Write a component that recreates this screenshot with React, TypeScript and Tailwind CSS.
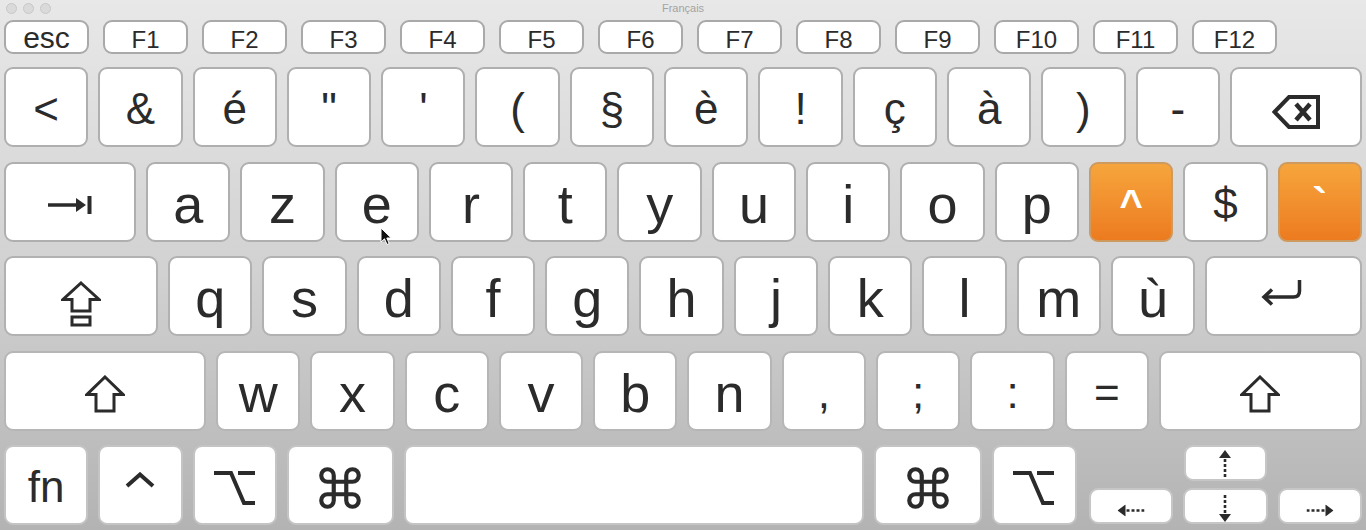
import { Command } from 'lucide-react';
import type { ReactNode } from 'react';

const fkeys = ['F1', 'F2', 'F3', 'F4', 'F5', 'F6', 'F7', 'F8', 'F9', 'F10', 'F11', 'F12'];
const numRow = ['<', '&', 'é', '"', "'", '(', '§', 'è', '!', 'ç', 'à', ')', '-'];
const azerty = ['a', 'z', 'e', 'r', 't', 'y', 'u', 'i', 'o', 'p'];
const qsdf = ['q', 's', 'd', 'f', 'g', 'h', 'j', 'k', 'l', 'm', 'ù'];
const wxcv = ['w', 'x', 'c', 'v', 'b', 'n'];
const punct = [',', ';', ':', '='];

function Key({ className, children }: { className: string; children?: ReactNode }) {
  return (
    <div
      className={`flex shrink-0 items-center justify-center rounded-[9px] border-2 bg-white text-[#2b2b2b] ${className}`}
    >
      {children}
    </div>
  );
}

function Label({ children, big }: { children: ReactNode; big?: boolean }) {
  return (
    <span className={`pt-[4px] leading-none ${big ? 'text-[54px]' : 'text-[44px]'}`}>{children}</span>
  );
}

function ShiftIcon() {
  return (
    <svg width="40" height="38" viewBox="0 0 40 38" className="mt-[6px]" fill="none" stroke="#2b2b2b" strokeWidth={3}>
      <path d="M20 2 L38 19.5 H29 V36 H11 V19.5 H2 Z" strokeLinejoin="miter" />
    </svg>
  );
}

function DotArrow({ dir }: { dir: 'up' | 'down' | 'left' | 'right' }) {
  const rot = { up: 0, down: 180, left: 270, right: 90 }[dir];
  return (
    <svg width="12" height="27" viewBox="0 0 12 27" style={{ transform: `rotate(${rot}deg)` }}>
      <polygon points="6,0 12,8 0,8" fill="#2b2b2b" />
      <line x1="6" y1="9" x2="6" y2="27" stroke="#2b2b2b" strokeWidth={2.6} strokeDasharray="3 2" />
    </svg>
  );
}

export default function App() {
  return (
    <div
      className="relative h-[530px] w-[1366px] overflow-hidden bg-gradient-to-b from-[#e8e8e8] via-[#d2d2d2] to-[#b3b3b3]"
      style={{ fontFamily: '"Liberation Sans", Arial, sans-serif' }}
    >
      {/* title bar */}
      <div className="relative flex h-[16px] items-center px-[6px]">
        <div className="flex gap-[6px]">
          <span className="h-[11px] w-[11px] rounded-full border border-[#c8c8c8] bg-[#dadada]" />
          <span className="h-[11px] w-[11px] rounded-full border border-[#c8c8c8] bg-[#dadada]" />
          <span className="h-[11px] w-[11px] rounded-full border border-[#c8c8c8] bg-[#dadada]" />
        </div>
        <span className="absolute inset-x-0 top-[1px] text-center text-[11px] leading-[14px] text-[#a3a3a3]">
          Français
        </span>
      </div>

      <div className="flex flex-col px-[4px]">
        {/* function row */}
        <div className="mt-[4px] flex h-[34px] gap-[14px]">
          <Key className="w-[85px] border-[#a9a9a9]">
            <span className="pt-[1px] text-[30px] leading-none">esc</span>
          </Key>
          {fkeys.map((f) => (
            <Key key={f} className="w-[85px] border-[#a9a9a9]">
              <span className="pt-[6px] text-[24px] leading-none">{f}</span>
            </Key>
          ))}
        </div>

        <div className="mt-[13px] flex flex-col gap-[14.5px]">
          {/* number row */}
          <div className="flex h-[80px] gap-[10px]">
            {numRow.map((k) => (
              <Key key={k} className="w-[84.3px] border-[#afafaf]">
                <Label>{k}</Label>
              </Key>
            ))}
            <Key className="flex-1 border-[#afafaf]">
              <svg width="48" height="34" viewBox="0 0 48 34" className="mt-[9px]" fill="none" stroke="#2b2b2b">
                <path d="M2.5 17 L17 2 H46 V32 H17 Z" strokeWidth={4} />
                <path d="M24 9 L38 25 M38 9 L24 25" strokeWidth={4.5} />
              </svg>
            </Key>
          </div>

          {/* azerty row */}
          <div className="flex h-[80px] gap-[10px]">
            <Key className="w-[132px] border-[#afafaf]">
              <svg width="44" height="20" viewBox="0 0 44 20" className="mt-[6px]">
                <line x1="0" y1="10" x2="30" y2="10" stroke="#2b2b2b" strokeWidth={3.5} />
                <polygon points="28,3 38,10 28,17" fill="#2b2b2b" />
                <rect x="39.5" y="1" width="4" height="18" fill="#2b2b2b" />
              </svg>
            </Key>
            {azerty.map((k) => (
              <Key key={k} className="w-[84.3px] border-[#afafaf]">
                <Label big>{k}</Label>
              </Key>
            ))}
            <Key className="w-[84.3px] border-[#cf9a5e] bg-gradient-to-b from-[#f6a53c] to-[#ec7b1f] text-white">
              <span className="pt-[4px] text-[40px] font-bold leading-none text-white">^</span>
            </Key>
            <Key className="w-[84.3px] border-[#afafaf]">
              <Label>$</Label>
            </Key>
            <Key className="flex-1 border-[#cf9a5e] bg-gradient-to-b from-[#f6a53c] to-[#ec7b1f] text-white">
              <span className="pt-[4px] text-[44px] font-bold leading-none text-white">`</span>
            </Key>
          </div>

          {/* qsdf row */}
          <div className="flex h-[80px] gap-[10px]">
            <Key className="w-[154px] border-[#b1b1b1]">
              <svg width="40" height="46" viewBox="0 0 40 46" className="mt-[15px]" fill="none" stroke="#2b2b2b" strokeWidth={3}>
                <path d="M20 2 L38 18.5 H29 V30 H11 V18.5 H2 Z" />
                <rect x="11" y="36" width="18" height="8" />
              </svg>
            </Key>
            {qsdf.map((k) => (
              <Key key={k} className="w-[84.3px] border-[#b1b1b1]">
                <Label big>{k}</Label>
              </Key>
            ))}
            <Key className="flex-1 border-[#b1b1b1]">
              <svg width="42" height="30" viewBox="0 0 42 30" className="mr-[4px] mt-[-6px]" fill="none" stroke="#2b2b2b" strokeWidth={3.5}>
                <path d="M38.5 2 V13 Q38.5 19 32.5 19 H4" />
                <path d="M11 11.5 L3 19 L11 26.5" />
              </svg>
            </Key>
          </div>

          {/* wxcv row */}
          <div className="flex h-[80px] gap-[10px]">
            <Key className="w-[202px] border-[#b6b6b6]">
              <ShiftIcon />
            </Key>
            {wxcv.map((k) => (
              <Key key={k} className="w-[84.3px] border-[#b6b6b6]">
                <Label big>{k}</Label>
              </Key>
            ))}
            {punct.map((k) => (
              <Key key={k} className="w-[84.3px] border-[#b6b6b6]">
                <Label>{k}</Label>
              </Key>
            ))}
            <Key className="flex-1 border-[#b6b6b6]">
              <ShiftIcon />
            </Key>
          </div>

          {/* bottom row */}
          <div className="flex h-[80px] gap-[10px]">
            <Key className="w-[84.3px] border-[#c4c4c4]">
              <Label>fn</Label>
            </Key>
            <Key className="w-[84.3px] border-[#c4c4c4]">
              <svg width="30" height="16" viewBox="0 0 30 16" className="mb-[10px]" fill="none" stroke="#2b2b2b" strokeWidth={4}>
                <path d="M2 14 L15 2.5 L28 14" />
              </svg>
            </Key>
            <Key className="w-[84.3px] border-[#c4c4c4]">
              <svg width="42" height="36" viewBox="0 0 42 36" className="mt-[6px]" fill="none" stroke="#2b2b2b" strokeWidth={4}>
                <path d="M0 3 H17 L30 33 H41" />
                <path d="M24 3 H41" />
              </svg>
            </Key>
            <Key className="w-[107px] border-[#c4c4c4]">
              <Command size={50} strokeWidth={2} color="#2b2b2b" className="mt-[5px]" />
            </Key>
            <Key className="w-[460px] border-[#c4c4c4]" />
            <Key className="w-[108px] border-[#c4c4c4]">
              <Command size={50} strokeWidth={2} color="#2b2b2b" className="mt-[5px]" />
            </Key>
            <Key className="w-[85px] border-[#c4c4c4]">
              <svg width="42" height="36" viewBox="0 0 42 36" className="mt-[6px]" fill="none" stroke="#2b2b2b" strokeWidth={4}>
                <path d="M0 3 H17 L30 33 H41" />
                <path d="M24 3 H41" />
              </svg>
            </Key>

            {/* arrow cluster */}
            <div className="flex flex-1 flex-col gap-[7px] pl-[2px]">
              <div className="flex h-[36px] justify-center">
                <Key className="w-[83px] rounded-[7px] border-[#c6c6c6]">
                  <DotArrow dir="up" />
                </Key>
              </div>
              <div className="flex h-[36px] gap-[10px]">
                <Key className="flex-1 rounded-[7px] border-[#c6c6c6]">
                  <div className="mt-[8px] flex h-[12px] w-[27px] items-center justify-center">
                    <DotArrow dir="left" />
                  </div>
                </Key>
                <Key className="flex-1 rounded-[7px] border-[#c6c6c6]">
                  <div className="mt-[4px]">
                    <DotArrow dir="down" />
                  </div>
                </Key>
                <Key className="flex-1 rounded-[7px] border-[#c6c6c6]">
                  <div className="mt-[8px] flex h-[12px] w-[27px] items-center justify-center">
                    <DotArrow dir="right" />
                  </div>
                </Key>
              </div>
            </div>
          </div>
        </div>
      </div>

      {/* mouse pointer */}
      <svg width="13" height="19" viewBox="0 0 13 19" className="absolute left-[380px] top-[227px]">
        <path d="M1 1 L1 15 L4.5 11.8 L7 17.5 L9.2 16.5 L6.8 11 L11.2 11 Z" fill="#111" stroke="#fff" strokeWidth={1} />
      </svg>
    </div>
  );
}
